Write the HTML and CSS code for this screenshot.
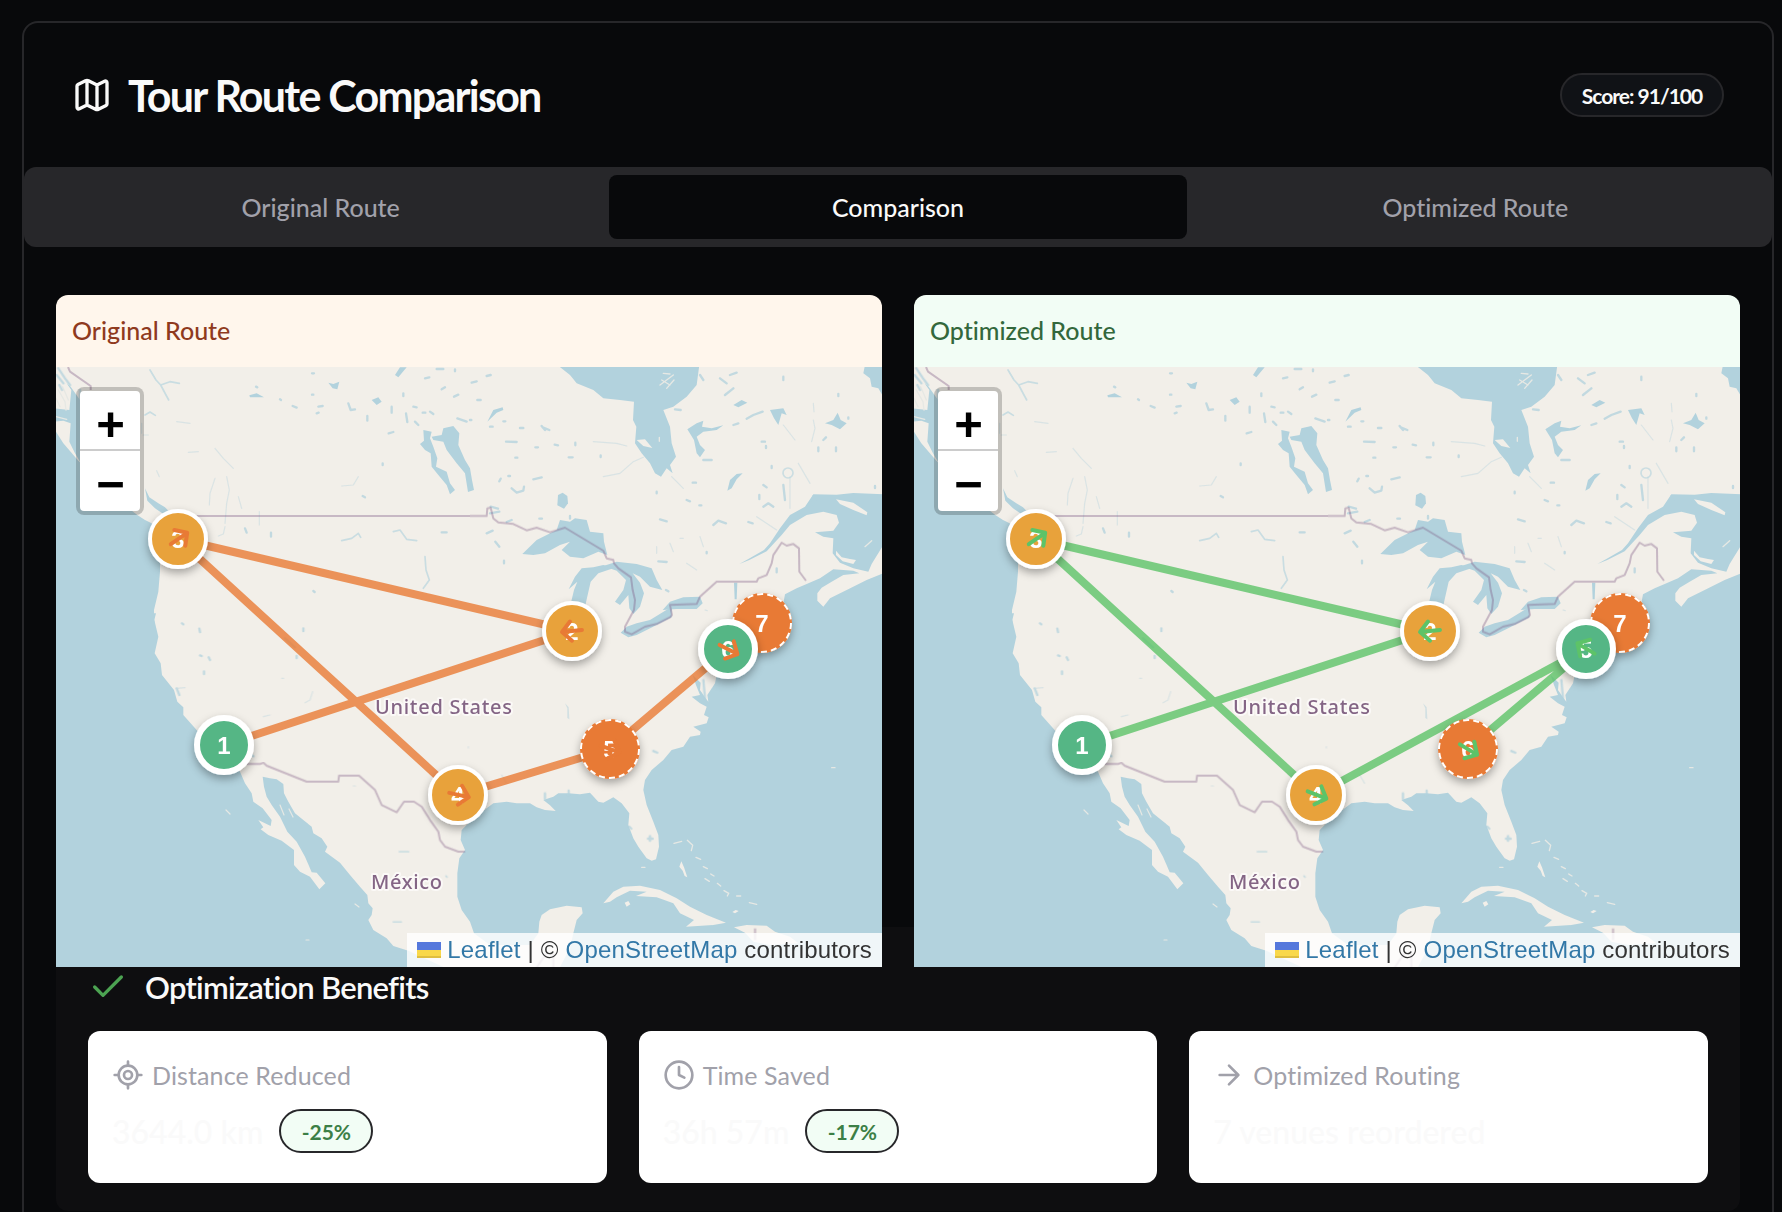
FILE: index.html
```html
<!DOCTYPE html>
<html lang="en">
<head>
<meta charset="utf-8">
<title>Tour Route Comparison</title>
<link rel="stylesheet" href="styles.css">
</head>
<body>
<svg class="defs" aria-hidden="true">
  <defs>
    <filter id="soft" x="-5%" y="-5%" width="110%" height="110%"><feGaussianBlur stdDeviation="0.6"/></filter>
    <filter id="drop" x="-30%" y="-30%" width="160%" height="170%"><feDropShadow dx="0" dy="4" stdDeviation="4" flood-color="#000" flood-opacity=".32"/></filter>
    <g id="arrow"><path d="M-10 0H10M1-9.6 10 0 1 9.6"/></g>
    <g id="basemap">
      <rect x="56" y="367" width="826" height="600" fill="#f2efe9"/>
      <g filter="url(#soft)">
      <g class="water">
        <g transform="translate(50 290) scale(.33333)">
          <path d="M10 415 18 425 40 460 85 512 230 650 262 675 285 690 305 700 330 780 330 845 325 905 312 960 312 985 318 1030H10Z"/>
          <path d="M10 355 58 360 64 300 50 280 62 290 90 330 110 460 90 515 75 490 58 455 62 400 40 392 10 395Z"/>
          <path d="M285 595 298 622 325 640 345 652 358 665 340 672 315 655 292 632Z"/>
          <path d="M1180 415 1210 408 1228 430 1225 465 1245 510 1260 535 1266 570 1272 600 1254 606 1245 550 1220 520 1190 480 1180 455 1150 450 1145 440 1175 435Z"/>
          <path d="M1120 420 1145 425 1140 445 1150 470 1162 505 1158 530 1190 545 1200 580 1215 600 1200 613 1190 585 1165 555 1145 530 1142 490 1125 480 1110 462 1122 452Z"/>
          <path d="M965 330 985 322 995 335 980 345Z M1035 255 1050 232 1070 232 1045 262Z M835 278 850 282 868 275 862 298 848 295Z M598 316 620 310 642 322 600 322Z"/>
        </g>
        <g transform="translate(470 360) scale(.33333)">
          <path d="M262 15 300 45 320 70 370 90 400 115 450 120 492 125 489 180 499 200 495 250 515 280 540 310 555 340 573 350 590 325 608 340 600 315 618 290 605 250 600 200 580 150 610 140 650 110 680 75 688 15Z"/>
          <path d="M157 582 200 540 260 510 270 480 300 485 315 475 350 480 360 515 400 520 402 545 412 585 385 575 340 595 300 590 275 570 300 545 270 555 225 580 190 585Z"/>
          <path d="M296 688 315 650 335 625 370 622 400 615 432 624 385 640 362 665 345 740 300 740 312 690 322 665Z"/>
          <path d="M400 618 440 605 500 612 545 625 560 660 577 690 540 680 510 650 488 640 510 668 522 700 510 740 490 762 478 745 475 705 450 735 435 725 460 690 468 660 440 632Z"/>
          <path d="M452 818 470 800 500 790 540 780 605 740 605 772 560 795 500 825 475 832Z"/>
          <path d="M578 750 600 725 640 712 690 710 698 730 680 747 620 747Z"/>
          <path d="M264 405 278 398 292 408 294 430 282 446 262 436Z"/>
          <path d="M1240 403 1150 399 1100 404 1030 403 1005 440 960 465 930 505 900 550 882 570 835 597 808 612 838 600 890 574 935 525 960 495 1010 465 1060 455 1100 465 1107 488 1090 512 1035 517 1060 530 1090 535 1088 580 1110 608 1150 625 1195 635 1205 612 1240 555Z"/>
          <path d="M1240 640 1190 660 1130 690 1080 715 1060 740 1042 722 1042 700 1055 683 1085 665 1120 645 1168 640 1150 632 1090 628 1050 655 1010 672 980 685 945 703 940 730 850 860 740 950 738 966 900 1040H1240Z"/>
          <path d="M1185 15 1180 40 1200 55 1205 80 1225 85 1240 110V15Z"/>
          <path d="M772 392 780 360 800 342 818 340 800 358 785 385Z M792 668h10l-2 50h-6Z"/>
          <path d="M652 208 680 190 700 182 696 200 725 205 760 196 740 210 700 215 680 230 690 255 705 270 690 292 680 280 672 240Z"/>
          <path d="M900 150 940 145 950 165 935 160 925 195 912 175Z M1065 190 1090 180 1103 158 1112 180 1130 190 1110 208 1085 195Z M1028 405 1040 420 1030 440 1024 430Z"/>
          <path d="M52 185 70 150 98 142 100 150 80 158Z M790 135 815 120 832 128 805 142Z"/>
        </g>
        <g transform="translate(50 620) scale(.33333)">
          <path d="M10-20 318-20 313 0 325 50 314 100 332 130 336 165 372 210 382 245 400 262 400 285 440 330 500 400 570 455 585 490 605 520 610 545 638 565 665 600 662 618 625 600 640 622 632 628 655 645 695 662 732 690 732 735 750 755 780 770 808 808 826 790 800 758 785 757 765 710 740 665 712 635 690 590 665 555 650 530 642 500 638 470 660 475 680 478 700 492 702 520 715 545 735 580 760 600 785 620 790 640 815 655 832 680 825 695 870 728 900 765 930 800 952 825 955 850 968 865 965 885 955 900 970 930 1010 955 1030 978 1075 992 1130 1018 1200 1050H10Z"/>
        </g>
        <g transform="translate(470 620) scale(.33333)">
          <path d="M1240 100H800L738 175 735 190 712 225 715 245 705 232 690 210 692 188 668 165 678 195 690 225 665 230 690 250 710 260 702 285 716 292 710 310 670 320 692 335 690 345 660 350 640 380 605 390 580 420 545 450 525 480 520 510 530 555 550 605 565 645 567 680 558 718 545 722 530 715 505 680 490 655 475 615 478 580 455 550 430 532 400 548 385 545 360 518 330 523 295 520 265 520 250 530 220 540 240 556 257 573 225 570 200 562 180 550 140 550 110 545 70 550 50 565 0 605-25 630-28 660-15 690-32 715-38 760-38 830-25 870 0 905 12 940 60 975 180 975 205 940 208 905 215 885 240 868 290 857 335 862 338 880 320 900 310 940 300 985 260 1060H1240Z"/>
          <path d="M285 250 296 262 298 298 292 294 292 265Z" opacity=".5"/>
        </g>
      </g>
      <g class="land">
        <g transform="translate(470 620) scale(.33333)">
          <path d="M400 850 430 815 460 800 510 797 570 810 620 835 660 860 710 885 768 908 730 915 648 920 672 900 630 880 610 850 560 832 498 828 530 815 480 812 440 832 420 845Z"/>
          <path d="M792 922 830 915 890 917 915 935 960 950 985 970 900 975 850 965 825 938Z M464 848 475 843 481 853 470 860Z M628 740 634 724 642 742 652 772 644 768 638 752Z M787 876 797 870 806 873 795 880Z"/>
          <path class="sand" d="M612 670 635 664M652 661 668 676 664 692M678 712 692 718M700 740 712 746M722 762 732 768M705 776 718 784M742 790 752 798M762 812 776 820 772 828M800 828h12M838 848 860 853M515 742h10M1085 443h10"/>
        </g>
        <g transform="translate(470 360) scale(.33333)">
          <path d="M500 240 525 238 547 264 520 258ZM1098 418 1150 428 1192 457 1190 466 1150 450 1110 432ZM1098 572 1115 592 1140 597 1158 600 1150 612 1118 604 1098 585Z"/>
          <path class="sand" d="M570 75 590 60 610 45M575 60 600 75M590 85 612 60M580 40 600 42M568 232v12M1185 560 1205 542"/>
        </g>
        <g transform="translate(50 290) scale(.33333)">
          <path class="sand" d="M18 325 30 350M25 300 45 335 48 360M38 290 55 330M18 380 50 388"/>
        </g>
        <path class="sand" d="M226 810 230 814M280 805 284 815M289 809 293 817M306 940h3M355 904l4 3"/>
      </g>
      <g class="lakes">
        <g transform="translate(50 290) scale(.33333)">
          <path class="thin" d="M300 240 318 270 332 285 356 330M332 285 360 275 388 280M285 375 300 366 316 376"/>
          <path d="M618 290l4 2M690 328l3 2M728 348 740 353M805 350 818 348M800 370 806 368M786 250h6M786 314h4M895 340 902 360 915 358M952 378V392M1025 350V368M1068 370 1072 396M1016 430 1030 426M1060 310v8M1090 350 1100 352M1118 368h8M1095 395 1105 405M1140 365 1150 372M1125 265 1138 262M1160 237h20M1215 238v6M1175 298 1185 292M1212 320 1225 314M1222 385 1250 395M998 520v5M938 618 945 622M585 715 590 728M663 728V740M790 903l4 3M1175 727 1190 727"/>
          <path class="faint" d="M495 565 480 610 478 645M530 560 538 600 530 640 525 700M565 620 575 655M628 665V705M415 487 445 485M495 475 520 505 550 535M320 542 328 560M875 588 910 585 925 560M380 395 420 400M505 738 520 732 525 710M275 400v30M280 435h15"/>
          <path class="thin" d="M1030 725 1050 720 1070 748 1100 752M875 752 905 745 925 730 932 742M1125 800 1128 840 1138 870 1120 895"/>
          <path d="M25 235 45 265 60 285M20 255 40 280M90 300v40M28 285 36 300"/>
        </g>
        <g transform="translate(470 360) scale(.33333)">
          <path d="M5 68 20 64M50 48 62 45M22 120h10M0 180h4M60 200h8M100 184h6M150 204h10M218 202 238 210M108 245 140 246M196 262h8M254 254 264 256M316 248v8M136 293h6M296 292h12M392 286v5M88 364 92 356M115 348h5M190 358 215 352M125 385 140 398 160 392 162 380M62 440 84 446M60 460 88 455M50 520 68 512M76 545 88 560M102 602v8M208 476h8M110 486 125 480M300 468v8M780 45 800 38M750 55 770 70M765 105 790 85M830 176 850 165 878 155M790 195 805 190M700 300 725 300M615 148 632 150M668 368h10M650 420l10 4M688 436h6M560 395v5M570 478 590 484M730 495 745 482 768 490M835 486 848 490M875 245h10M888 258v6M905 318v6M868 405v12M940 375 945 420M880 375 890 382M880 440 895 430 910 440M1045 262v12M1060 240 1068 232M1098 262v12M1105 102v6M1135 172v4M1215 378v6M940 50v10M565 604 590 606M588 690 595 694M710 576v4M920 625v12M690 45 700 60M225 210 215 198"/>
          <path class="faint" d="M370 245 440 250 470 258M400 350 450 340 490 305 520 292M605 350 640 385M960 350V445M860 470 920 510M940 195 975 240M985 310 1020 370M600 550 610 575M630 535h10M690 530 700 560M650 610 680 630M560 560v20M705 750 712 752M1030 130 1032 155M1030 180 1035 205 1025 245"/>
          <circle class="ring" cx="954" cy="339" r="15"/>
        </g>
        <g transform="translate(50 620) scale(.33333)">
          <path d="M396 10l4 3M448 26 450 36M450 106l5 2M476 112 480 120M462 154v8M760 25v8M740 108v6M705 55 735 82M380 205 388 225M606 405l4 4"/>
          <path class="thin" d="M1048 695h28M1030 906h24M1188 768l3 3"/>
          <path class="faint" d="M380 205 405 203M765 248 780 240 788 215M640 290 660 285M695 175h6M1255 380v4M910 498h6M1355 465 1370 490"/>
        </g>
        <g transform="translate(470 620) scale(.33333)"><path d="M540 648V662M534 656H548M550 393 562 398M225 520v16M296 512v12M478 620l6 6M700 180 705 235"/></g>
      </g>
      <g class="borders">
        <path transform="translate(50 290) scale(.33333)" d="M54 231 60 245 122 288V300M440 678H1260"/>
        <path transform="translate(470 360) scale(.33333)" d="M0 468H50L52 445 62 443 70 475 85 487 130 492 170 511 200 503 240 517 285 503 400 572 410 595 430 600 432 610 445 625 483 652 488 690 495 720 492 750 465 800V815L485 823 525 800 560 792 600 772 606 765 600 735 680 732 690 710 740 665H860L865 655 890 645 905 610 910 585 935 548 950 557 970 552 987 565 988 635 1008 662"/>
        <path transform="translate(50 620) scale(.33333)" d="M590 432H630L640 428 650 437 770 485H865L867 467H927L975 510 995 555 1040 577 1062 545H1092L1115 560 1140 600 1165 635 1170 660 1185 680 1225 695H1245M2115 925V960M1455 1050 1475 1020 1490 1000M1510 1050V1000"/>
      </g>
      </g>
      <text class="country" x="375" y="713.5" textLength="137">United States</text>
      <text class="country" x="371" y="888.5" textLength="71">México</text>
    </g>
  </defs>
</svg>

<main class="card">
  <header class="card-head">
    <svg class="i40" viewBox="0 0 24 24"><path d="M14.106 5.553a2 2 0 0 0 1.788 0l3.659-1.83A1 1 0 0 1 21 4.619v12.764a1 1 0 0 1-.553.894l-4.553 2.277a2 2 0 0 1-1.788 0l-4.212-2.106a2 2 0 0 0-1.788 0l-3.659 1.83A1 1 0 0 1 3 19.381V6.618a1 1 0 0 1 .553-.894l4.553-2.277a2 2 0 0 1 1.788 0zM15 5.764v15M9 3.236v15"/></svg>
    <h1>Tour Route Comparison</h1>
    <span class="badge score">Score: 91/100</span>
  </header>

  <nav class="tabs">
    <span class="tab">Original Route</span>
    <span class="tab active">Comparison</span>
    <span class="tab">Optimized Route</span>
  </nav>

  <section class="content">
    <div class="maps">
      <article class="map-card original">
        <h2>Original Route</h2>
        <div class="map">
          <svg class="canvas" viewBox="56 367 826 600">
            <use href="#basemap"/>
            <path class="route" d="M224 745 572 631 178 539 458 795 610 749 728 649 762 623"/>
            <g class="pin new"><circle class="disc" cx="762" cy="623" r="30"/><circle class="dash" cx="762" cy="623" r="29"/><text x="762" y="632">7</text></g>
            <g class="pin stop"><circle class="disc" cx="178" cy="539" r="28"/><text x="178" y="548">3</text></g>
            <g class="pin stop"><circle class="disc" cx="572" cy="631" r="28"/><text x="572" y="640">2</text></g>
            <g class="pin kept"><circle class="disc" cx="728" cy="649" r="27"/><text x="728" y="658">6</text></g>
            <g class="pin kept"><circle class="disc" cx="224" cy="745" r="27"/><text x="224" y="754">1</text></g>
            <g class="pin new"><circle class="disc" cx="610" cy="749" r="30"/><circle class="dash" cx="610" cy="749" r="29"/><text x="610" y="758">5</text></g>
            <g class="pin stop"><circle class="disc" cx="458" cy="795" r="28"/><text x="458" y="804">4</text></g>
            <g class="arrows">
              <use href="#arrow" transform="translate(572 631) rotate(174)"/>
              <use href="#arrow" transform="translate(179 538.5) rotate(-35)"/>
              <use href="#arrow" transform="translate(459 795) rotate(12.5)"/>
              <use href="#arrow" transform="translate(610 749) rotate(20)"/>
              <use href="#arrow" transform="translate(728.5 649.5) rotate(27)"/>
            </g>
          </svg>
          <div class="zoom"><span>+</span><span>−</span></div>
          <div class="credit"><svg class="flag" viewBox="0 0 24 16"><path fill="#5578dc" d="M0 0h24v8H0z"/><path fill="#f9d84a" d="M0 8h24v6H0z"/><path fill="#dfbe3f" d="M0 14h24v2H0z"/></svg><a>Leaflet</a> | © <a>OpenStreetMap</a> contributors</div>
        </div>
      </article>

      <article class="map-card optimized">
        <h2>Optimized Route</h2>
        <div class="map">
          <svg class="canvas" viewBox="56 367 826 600">
            <use href="#basemap"/>
            <path class="route" d="M224 745 572 631 178 539 458 795 728 649 610 749 728 649"/>
            <g class="pin new"><circle class="disc" cx="762" cy="623" r="30"/><circle class="dash" cx="762" cy="623" r="29"/><text x="762" y="632">7</text></g>
            <g class="pin stop"><circle class="disc" cx="178" cy="539" r="28"/><text x="178" y="548">3</text></g>
            <g class="pin stop"><circle class="disc" cx="572" cy="631" r="28"/><text x="572" y="640">2</text></g>
            <g class="pin kept"><circle class="disc" cx="728" cy="649" r="27"/><text x="728" y="658">5</text></g>
            <g class="pin kept"><circle class="disc" cx="224" cy="745" r="27"/><text x="224" y="754">1</text></g>
            <g class="pin new"><circle class="disc" cx="610" cy="749" r="30"/><circle class="dash" cx="610" cy="749" r="29"/><text x="610" y="758">6</text></g>
            <g class="pin stop"><circle class="disc" cx="458" cy="795" r="28"/><text x="458" y="804">4</text></g>
            <g class="arrows">
              <use href="#arrow" transform="translate(572 631) rotate(174)"/>
              <use href="#arrow" transform="translate(179 538.5) rotate(-35)"/>
              <use href="#arrow" transform="translate(459 795) rotate(21)"/>
              <use href="#arrow" transform="translate(728 648.5) rotate(211)"/>
              <use href="#arrow" transform="translate(610.5 749.5) rotate(31)"/>
            </g>
          </svg>
          <div class="zoom"><span>+</span><span>−</span></div>
          <div class="credit"><svg class="flag" viewBox="0 0 24 16"><path fill="#5578dc" d="M0 0h24v8H0z"/><path fill="#f9d84a" d="M0 8h24v6H0z"/><path fill="#dfbe3f" d="M0 14h24v2H0z"/></svg><a>Leaflet</a> | © <a>OpenStreetMap</a> contributors</div>
        </div>
      </article>
    </div>

    <section class="benefits">
      <h3><svg class="i40 check" viewBox="0 0 24 24"><path d="M20 6 9 17l-5-5"/></svg><span>Optimization Benefits</span></h3>
      <div class="stats">
        <div class="stat">
          <p class="label"><svg class="i32" viewBox="0 0 24 24"><path d="M2 12h3M19 12h3M12 2v3M12 19v3"/><circle cx="12" cy="12" r="7"/><circle cx="12" cy="12" r="3"/></svg><span>Distance Reduced</span></p>
          <p class="value"><span>3644.0 km</span><span class="badge gain">-25%</span></p>
        </div>
        <div class="stat">
          <p class="label"><svg class="i32" viewBox="0 0 24 24"><circle cx="12" cy="12" r="10"/><path d="M12 6v6l4 2"/></svg><span>Time Saved</span></p>
          <p class="value"><span>36h 57m</span><span class="badge gain">-17%</span></p>
        </div>
        <div class="stat">
          <p class="label"><svg class="i32" viewBox="0 0 24 24"><path d="M5 12h14M12 5l7 7-7 7"/></svg><span>Optimized Routing</span></p>
          <p class="value"><span>7 venues reordered</span></p>
        </div>
      </div>
    </section>
  </section>
</main>
</body>
</html>
```
FILE: styles.css
```css
* { box-sizing: border-box; margin: 0; }

body {
  background: #08090b;
  color: #fafafa;
  font-family: Lato, "Open Sans", sans-serif;
  font-variant-ligatures: none;
  height: 1212px;
  padding: 21px 8px 0 22px;
}

.defs { position: absolute; width: 0; height: 0; }

.card {
  height: 1191px;
  border: 2px solid #27272a;
  border-bottom: 0;
  border-radius: 16px 16px 0 0;
}

.card-head {
  display: flex;
  align-items: center;
  height: 144px;
  padding: 0 48px;
  gap: 16px;
}

.i40, .i32 {
  fill: none;
  stroke: currentColor;
  stroke-width: 2;
  stroke-linecap: round;
  stroke-linejoin: round;
  flex: none;
}
.i40 { width: 40px; height: 40px; }
.i32 { width: 32px; height: 32px; }

h1 {
  flex: 1;
  padding-top: 2px;
  font-size: 43px;
  font-weight: 700;
  line-height: 64px;
  letter-spacing: -1.75px;
  white-space: nowrap;
}

.badge {
  display: flex;
  align-items: center;
  justify-content: center;
  height: 44px;
  border: 2px solid #27272a;
  border-radius: 22px;
  font-size: 21px;
  font-weight: 700;
}
.score { width: 164px; background: #101216; letter-spacing: -1px; }
.gain { width: 94px; background: #f2fdf5; color: #3c7f46; }

.tabs {
  display: grid;
  grid-template-columns: repeat(3, 1fr);
  height: 80px;
  padding: 8px;
  border-radius: 12px;
  background: #27272a;
}
.tab {
  display: flex;
  align-items: center;
  justify-content: center;
  padding-bottom: 1px;
  border-radius: 8px;
  color: #a1a1aa;
  font-size: 25px;
  font-weight: 500;
}
.active { background: #08090b; color: #fafafa; }

.content { padding: 48px 32px 0; }

.maps {
  position: relative;
  z-index: 1;
  display: grid;
  grid-template-columns: 1fr 1fr;
  gap: 32px;
}
.map-card { border-radius: 12px 12px 0 0; overflow: hidden; }
.map-card h2 {
  height: 72px;
  padding-left: 16px;
  font-size: 25px;
  font-weight: 500;
  line-height: 71px;
}
.original h2 { background: #fff6ec; color: #8f3a1e; }
.optimized h2 { background: #f2fdf5; color: #33683c; }

.map { position: relative; height: 600px; }
.canvas { display: block; width: 826px; height: 600px; }

.water { fill: #b2d2dd; }
.land { fill: #f2efe9; }
.sand { fill: none; stroke: #e6e8e4; stroke-width: 4; stroke-linecap: round; }
.land > .sand { stroke-width: 1.2; }
.lakes { fill: none; stroke: #b2d2dd; stroke-width: 7; stroke-linecap: round; stroke-linejoin: round; opacity: .75; }
.thin { stroke-width: 5; opacity: .85; }
.faint { stroke-width: 3.5; opacity: .5; }
.ring { stroke-width: 5; opacity: .8; }
.borders { fill: none; stroke: #7c5580; stroke-width: 6; stroke-linejoin: round; opacity: .36; }
.country {
  fill: #846585;
  stroke: #fbf9f7;
  stroke-width: 4px;
  stroke-linejoin: round;
  paint-order: stroke;
  font: 500 20px "Noto Sans", sans-serif;
}

.route { fill: none; stroke-width: 8; stroke-linecap: round; stroke-linejoin: round; opacity: .8; }
.arrows { fill: none; stroke-width: 4; stroke-linecap: round; stroke-linejoin: round; }
.original .route, .original .arrows { stroke: #e87a35; }
.optimized .route, .optimized .arrows { stroke: #5dc368; }

.pin .disc { stroke: #fff; filter: url(#drop); }
.pin text {
  fill: #fff;
  font: bold 24px "Liberation Sans", sans-serif;
  text-anchor: middle;
}
.stop .disc { fill: #e8a23b; stroke-width: 4; }
.kept .disc { fill: #54b685; stroke-width: 6; }
.new .disc { fill: #e87a35; stroke: none; }
.dash { fill: none; stroke: #fff; stroke-width: 2; stroke-dasharray: 6.1 4.02; }

.zoom {
  position: absolute;
  left: 20px;
  top: 20px;
  width: 68px;
  height: 128px;
  border: 4px solid rgba(0, 0, 0, .2);
  border-radius: 8px;
  background: #fff;
  background-clip: padding-box;
}
.zoom span {
  display: block;
  height: 60px;
  padding-left: 1px;
  color: #000;
  font: bold 49px/66px "Liberation Sans", sans-serif;
  text-align: center;
}
.zoom span:first-child { border-bottom: 2px solid #ccc; }

.credit {
  position: absolute;
  right: 0;
  bottom: 0;
  height: 34px;
  padding: 0 10px;
  background: rgba(255, 255, 255, .8);
  color: #333;
  font: 24px/34px "Liberation Sans", sans-serif;
  letter-spacing: .19px;
  white-space: nowrap;
}
.credit a { color: #3378a7; }
.flag { width: 24px; height: 16px; margin-right: 6px; }

.benefits {
  height: 284px;
  margin-top: -40px;
  padding: 32px;
  border-radius: 12px;
  background: #0e0e10;
}
.benefits h3 {
  display: flex;
  align-items: center;
  gap: 17px;
  height: 56px;
  margin-bottom: 16px;
  font-size: 31px;
  font-weight: 600;
  letter-spacing: -.75px;
}
.check { color: #4ca352; }

.stats { display: grid; grid-template-columns: repeat(3, 1fr); gap: 32px; }
.stat { height: 152px; padding: 24px; border-radius: 12px; background: #fff; }
.label {
  display: flex;
  align-items: center;
  gap: 8px;
  height: 40px;
  margin-bottom: 8px;
  color: #a1a1aa;
  font-size: 25px;
  letter-spacing: .12px;
}
.value {
  display: flex;
  align-items: center;
  gap: 16px;
  height: 56px;
  color: #fafafa;
  font-size: 32px;
  font-weight: 500;
  white-space: nowrap;
}
```
